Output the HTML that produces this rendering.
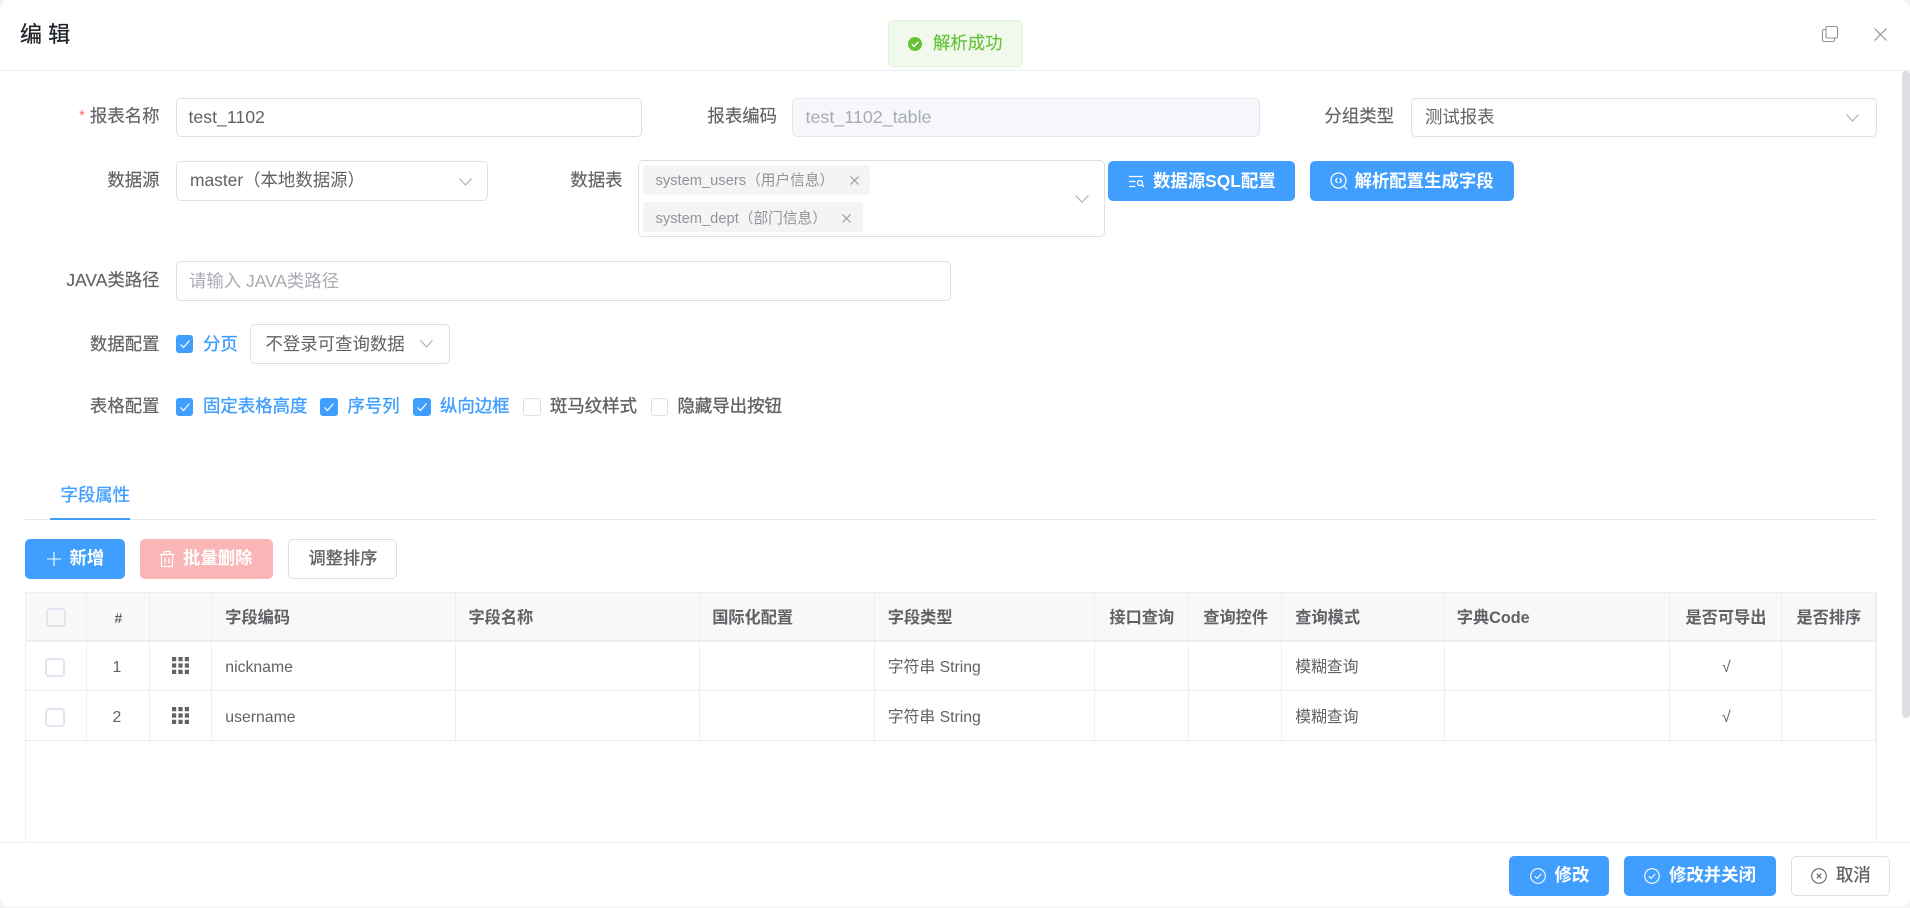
<!DOCTYPE html>
<html lang="zh">
<head>
<meta charset="utf-8">
<title>编辑</title>
<style>
html,body{margin:0;padding:0;width:1910px;height:908px;overflow:hidden;background:#f4f4f4;}
body{font-family:"Liberation Sans","Noto Sans CJK SC",sans-serif;font-size:17.4px;color:#606266;position:relative;}
#dlg{position:absolute;left:0;top:0;width:1910px;height:907px;background:#fff;border-radius:10px;overflow:hidden;}
.a{position:absolute;box-sizing:border-box;}
.t{position:absolute;white-space:nowrap;line-height:24px;height:24px;}
.lb{position:absolute;white-space:nowrap;line-height:24px;height:24px;text-align:right;width:150px;-webkit-text-stroke:.15px #606266;}
.box{position:absolute;box-sizing:border-box;border:1.2px solid #dcdfe6;border-radius:5px;background:#fff;}
.btn{position:absolute;box-sizing:border-box;border-radius:5px;background:#409eff;}
.bt{position:absolute;white-space:nowrap;line-height:24px;height:24px;color:#fff;font-weight:700;}
.cb{position:absolute;box-sizing:border-box;width:17.5px;height:17.5px;border-radius:3px;background:#409eff;}
.cu{position:absolute;box-sizing:border-box;width:17.5px;height:17.5px;border-radius:3px;background:#fff;border:1.2px solid #dcdfe6;}
.cl{color:#409eff;-webkit-text-stroke:.35px #409eff;}
.ml{-webkit-text-stroke:.35px #606266;}
.vl{position:absolute;width:1px;background:#ebeef5;}
.hl{position:absolute;height:1px;background:#ebeef5;}
.th{position:absolute;white-space:nowrap;line-height:24px;height:24px;font-size:16.2px;font-weight:700;color:#606266;top:606px;}
.td{position:absolute;white-space:nowrap;line-height:24px;height:24px;font-size:15.8px;color:#606266;}
.tc{position:absolute;box-sizing:border-box;width:20px;height:19px;border:2px solid #e1e5ee;border-radius:4px;background:#fff;}
svg{position:absolute;overflow:visible;}
</style>
</head>
<body>
<div id="dlg">
<!-- header -->
<div class="t" style="left:20px;top:22px;font-size:22px;line-height:26px;height:26px;color:#1f2329;-webkit-text-stroke:.3px #1f2329;">编 辑</div>
<div class="hl" style="left:0;top:70px;width:1910px;background:#ebeef5;"></div>
<svg style="left:1821px;top:25px" width="18" height="18" viewBox="0 0 18 18" fill="none" stroke="#909399" stroke-width="1.1"><rect x="5" y="1.500" width="11.500" height="11.500" rx="1.500"/><path d="M5 4.500H3.200A1.700 1.700 0 0 0 1.500 6.200v8.600a1.700 1.700 0 0 0 1.700 1.700h8.600a1.700 1.700 0 0 0 1.700-1.700V13"/></svg>
<svg style="left:1874px;top:28px" width="13" height="13" viewBox="0 0 13 13" fill="none" stroke="#8a8d93" stroke-width="1.1"><path d="M.5.500l12 12M12.500.500l-12 12"/></svg>
<!-- scrollbar -->
<div class="a" style="left:1902px;top:71px;width:8px;height:647px;background:#dddee1;border-radius:4px;"></div>

<!-- row 1 -->
<div class="t" style="left:79px;top:103.500px;color:#f56c6c;font-size:15px;">*</div>
<div class="lb" style="left:9.500px;top:104.300px;">报表名称</div>
<div class="box" style="left:175.500px;top:97.500px;width:466px;height:39.500px;"></div>
<div class="t" style="left:188.500px;top:104.800px;font-size:17.7px;">test_1102</div>
<div class="lb" style="left:627px;top:104.300px;">报表编码</div>
<div class="box" style="left:792px;top:97.500px;width:468px;height:39.500px;background:#f5f7fa;border-color:#e4e7ed;"></div>
<div class="t" style="left:805.500px;top:104.800px;color:#a8abb2;font-size:17.9px;">test_1102_table</div>
<div class="lb" style="left:1244px;top:104.300px;">分组类型</div>
<div class="box" style="left:1410.500px;top:97.500px;width:466px;height:39.500px;"></div>
<div class="t" style="left:1425px;top:104.800px;">测试报表</div>
<svg style="left:1846px;top:114px" width="13" height="8" viewBox="0 0 13 8" fill="none" stroke="#a8abb2" stroke-width="1.1"><path d="M.5.500l6 6.500 6-6.500"/></svg>

<!-- row 2 -->
<div class="lb" style="left:9.500px;top:167.500px;">数据源</div>
<div class="box" style="left:175.500px;top:161.300px;width:312.500px;height:39.500px;"></div>
<div class="t" style="left:190px;top:168.400px;">master（本地数据源）</div>
<svg style="left:458.500px;top:178px" width="13" height="8" viewBox="0 0 13 8" fill="none" stroke="#a8abb2" stroke-width="1.1"><path d="M.5.500l6 6.500 6-6.500"/></svg>
<div class="lb" style="left:472.500px;top:167.500px;">数据表</div>
<div class="box" style="left:638px;top:160px;width:466.500px;height:77px;"></div>
<div class="a" style="left:643px;top:165px;width:227px;height:30px;background:#f4f4f5;border-radius:4px;"></div>
<div class="t" style="left:655.500px;top:169px;font-size:14.700px;color:#909399;">system_users（用户信息）</div>
<svg style="left:850px;top:175.500px" width="9" height="9" viewBox="0 0 9 9" fill="none" stroke="#909399" stroke-width="1"><path d="M.5.500l8 8M8.500.500l-8 8"/></svg>
<div class="a" style="left:643px;top:201.700px;width:220px;height:30.300px;background:#f4f4f5;border-radius:4px;"></div>
<div class="t" style="left:655.500px;top:207px;font-size:14.700px;color:#909399;">system_dept（部门信息）</div>
<svg style="left:842px;top:213.500px" width="9" height="9" viewBox="0 0 9 9" fill="none" stroke="#909399" stroke-width="1"><path d="M.5.500l8 8M8.500.500l-8 8"/></svg>
<svg style="left:1075px;top:195px" width="14" height="8" viewBox="0 0 14 8" fill="none" stroke="#a8abb2" stroke-width="1.1"><path d="M.5.500L7 7.200 13.500.500"/></svg>

<div class="btn" style="left:1108px;top:161px;width:187px;height:40px;"></div>
<svg style="left:1129px;top:175px" width="16" height="13" viewBox="0 0 16 13" fill="none" stroke="#fff" stroke-width="1.300"><path d="M0 1.500h14M0 6.500h6.500M0 11.500h6.500"/><circle cx="11" cy="8" r="2.500"/><path d="M13 10l2 2"/></svg>
<div class="bt" style="left:1153px;top:168.700px;">数据源SQL配置</div>
<div class="btn" style="left:1310px;top:161px;width:204px;height:40px;"></div>
<svg style="left:1330px;top:172px" width="18" height="18" viewBox="0 0 18 18" fill="none" stroke="#fff" stroke-width="1.200"><circle cx="8.500" cy="8.500" r="7.500"/><path d="M14 14l3 3.500"/><path d="M7.500 6L5.500 8.500 7.500 11M9.500 6l2 2.500-2 2.500"/></svg>
<div class="bt" style="left:1354.500px;top:168.700px;">解析配置生成字段</div>

<!-- row 3 -->
<div class="lb" style="left:9.500px;top:268px;">JAVA类路径</div>
<div class="box" style="left:175.500px;top:261.300px;width:775px;height:39.500px;"></div>
<div class="t" style="left:189px;top:269px;color:#a8abb2;">请输入 JAVA类路径</div>

<!-- row 4 -->
<div class="lb" style="left:9.500px;top:332px;">数据配置</div>
<div class="cb" style="left:175.500px;top:335px;"></div>
<svg style="left:179.500px;top:339px" width="10" height="10" viewBox="0 0 10 10" fill="none" stroke="#fff" stroke-width="1.200"><path d="M.5 5.500L3.500 8.500 9.500 1.500"/></svg>
<div class="t cl" style="left:203px;top:331.500px;">分页</div>
<div class="box" style="left:250px;top:324.300px;width:199.500px;height:39.500px;"></div>
<div class="t" style="left:265.500px;top:332px;">不登录可查询数据</div>
<svg style="left:420px;top:340px" width="13" height="8" viewBox="0 0 13 8" fill="none" stroke="#a8abb2" stroke-width="1.100"><path d="M.5.500l6 6.500 6-6.500"/></svg>

<!-- row 5 -->
<div class="lb" style="left:9.500px;top:393.700px;">表格配置</div>
<div class="cb" style="left:175.500px;top:398px;"></div>
<svg style="left:179.500px;top:402px" width="10" height="10" viewBox="0 0 10 10" fill="none" stroke="#fff" stroke-width="1.200"><path d="M.5 5.500L3.500 8.500 9.500 1.500"/></svg>
<div class="t cl" style="left:203px;top:393.700px;">固定表格高度</div>
<div class="cb" style="left:320px;top:398px;"></div>
<svg style="left:324px;top:402px" width="10" height="10" viewBox="0 0 10 10" fill="none" stroke="#fff" stroke-width="1.200"><path d="M.5 5.500L3.500 8.500 9.500 1.500"/></svg>
<div class="t cl" style="left:347.500px;top:393.700px;">序号列</div>
<div class="cb" style="left:413px;top:398px;"></div>
<svg style="left:417px;top:402px" width="10" height="10" viewBox="0 0 10 10" fill="none" stroke="#fff" stroke-width="1.200"><path d="M.5 5.500L3.500 8.500 9.500 1.500"/></svg>
<div class="t cl" style="left:440px;top:393.700px;">纵向边框</div>
<div class="cu" style="left:523px;top:398px;"></div>
<div class="t ml" style="left:550px;top:393.700px;">斑马纹样式</div>
<div class="cu" style="left:650.500px;top:398px;"></div>
<div class="t ml" style="left:677.500px;top:393.700px;">隐藏导出按钮</div>

<!-- tabs -->
<div class="a" style="left:25px;top:518.500px;width:1851px;height:1.500px;background:#e4e7ed;"></div>
<div class="a" style="left:50px;top:518px;width:80px;height:2px;background:#409eff;"></div>
<div class="t cl" style="left:60.500px;top:482.500px;">字段属性</div>

<!-- toolbar -->
<div class="btn" style="left:25px;top:539px;width:100px;height:40px;"></div>
<svg style="left:47px;top:552px" width="14" height="14" viewBox="0 0 14 14" fill="none" stroke="#fff" stroke-width="1.100"><path d="M7 0v14M0 7h14"/></svg>
<div class="bt" style="left:69.500px;top:545.700px;">新增</div>
<div class="btn" style="left:140px;top:539px;width:133px;height:40px;background:#fab6b6;"></div>
<svg style="left:159px;top:549.500px" width="16" height="18" viewBox="0 0 16 18" fill="none" stroke="#fff" stroke-width="1.200"><path d="M.5 4.500h15M5 4.500V1.500h6v3M2.500 4.500v12h11v-12M6 7.500v6M10 7.500v6"/></svg>
<div class="bt" style="left:183px;top:545.700px;">批量删除</div>
<div class="box" style="left:288px;top:539px;width:108.500px;height:40px;"></div>
<div class="t ml" style="left:308.500px;top:545.700px;font-size:17.2px;">调整排序</div>

<!-- table -->
<div class="a" style="left:25.500px;top:592.500px;width:1850.500px;height:48px;background:#f8f8f9;"></div>
<div class="hl" style="left:25px;top:592px;width:1851px;"></div>
<div class="hl" style="left:25px;top:640px;width:1851px;height:2px;background:#ebeef5;"></div>
<div class="hl" style="left:25px;top:690px;width:1851px;"></div>
<div class="hl" style="left:25px;top:740px;width:1851px;"></div>
<div class="vl" style="left:25px;top:592px;height:250px;"></div>
<div class="vl" style="left:86px;top:592px;height:150px;"></div>
<div class="vl" style="left:149px;top:592px;height:150px;"></div>
<div class="vl" style="left:211px;top:592px;height:150px;"></div>
<div class="vl" style="left:455px;top:592px;height:150px;"></div>
<div class="vl" style="left:699px;top:592px;height:150px;"></div>
<div class="vl" style="left:874px;top:592px;height:150px;"></div>
<div class="vl" style="left:1094px;top:592px;height:150px;"></div>
<div class="vl" style="left:1188px;top:592px;height:150px;"></div>
<div class="vl" style="left:1281px;top:592px;height:150px;"></div>
<div class="vl" style="left:1444px;top:592px;height:150px;"></div>
<div class="vl" style="left:1669px;top:592px;height:150px;"></div>
<div class="vl" style="left:1781px;top:592px;height:150px;"></div>
<div class="vl" style="left:1875px;top:592px;height:150px;"></div>
<div class="vl" style="left:1876px;top:592px;height:250px;"></div>

<div class="tc" style="left:46px;top:608.300px;background:#f8f8f9;"></div>
<div class="th" style="left:114.500px;font-size:14px;">#</div>
<div class="th" style="left:225.300px;">字段编码</div>
<div class="th" style="left:468.500px;">字段名称</div>
<div class="th" style="left:712.200px;">国际化配置</div>
<div class="th" style="left:887.800px;">字段类型</div>
<div class="th" style="left:1109.400px;">接口查询</div>
<div class="th" style="left:1203.300px;">查询控件</div>
<div class="th" style="left:1295.300px;">查询模式</div>
<div class="th" style="left:1456.800px;">字典Code</div>
<div class="th" style="left:1685.500px;">是否可导出</div>
<div class="th" style="left:1796.500px;">是否排序</div>

<div class="tc" style="left:44.800px;top:658.300px;"></div>
<div class="td" style="left:112.500px;top:656px;">1</div>
<svg style="left:172px;top:657px" width="17" height="17" viewBox="0 0 17 17" fill="#606266"><path d="M0 0h4.200v4.200H0zM6.400 0h4.200v4.200H6.400zM12.800 0H17v4.200h-4.200zM0 6.400h4.200v4.200H0zM6.400 6.400h4.200v4.200H6.400zM12.800 6.400H17v4.200h-4.200zM0 12.800h4.200V17H0zM6.400 12.800h4.200V17H6.400zM12.800 12.800H17V17h-4.200z"/></svg>
<div class="td" style="left:225.300px;top:656px;">nickname</div>
<div class="td" style="left:887.800px;top:656px;">字符串 String</div>
<div class="td" style="left:1295.300px;top:656px;">模糊查询</div>
<div class="td" style="left:1722px;top:656px;">√</div>

<div class="tc" style="left:44.800px;top:708.300px;"></div>
<div class="td" style="left:112.500px;top:706px;">2</div>
<svg style="left:172px;top:707px" width="17" height="17" viewBox="0 0 17 17" fill="#606266"><path d="M0 0h4.200v4.200H0zM6.400 0h4.200v4.200H6.400zM12.800 0H17v4.200h-4.200zM0 6.400h4.200v4.200H0zM6.400 6.400h4.200v4.200H6.400zM12.800 6.400H17v4.200h-4.200zM0 12.800h4.200V17H0zM6.400 12.800h4.200V17H6.400zM12.800 12.800H17V17h-4.200z"/></svg>
<div class="td" style="left:225.300px;top:706px;">username</div>
<div class="td" style="left:887.800px;top:706px;">字符串 String</div>
<div class="td" style="left:1295.300px;top:706px;">模糊查询</div>
<div class="td" style="left:1722px;top:706px;">√</div>

<!-- footer -->
<div class="a" style="left:0;top:842px;width:1910px;height:65px;background:#fff;border-top:1px solid #ebeef5;"></div>
<div class="btn" style="left:1509px;top:856px;width:100px;height:40px;"></div>
<svg style="left:1530px;top:867.500px" width="16" height="16" viewBox="0 0 16 16" fill="none" stroke="#fff" stroke-width="1.100"><circle cx="8" cy="8" r="7.300"/><path d="M4.800 8.200l2.300 2.300 4.200-4.700"/></svg>
<div class="bt" style="left:1554.500px;top:862.800px;">修改</div>
<div class="btn" style="left:1624px;top:856px;width:152px;height:40px;"></div>
<svg style="left:1644px;top:867.500px" width="16" height="16" viewBox="0 0 16 16" fill="none" stroke="#fff" stroke-width="1.100"><circle cx="8" cy="8" r="7.300"/><path d="M4.800 8.200l2.300 2.300 4.200-4.700"/></svg>
<div class="bt" style="left:1669px;top:862.800px;">修改并关闭</div>
<div class="box" style="left:1791px;top:856px;width:98.500px;height:40px;"></div>
<svg style="left:1811px;top:867.500px" width="16" height="16" viewBox="0 0 16 16" fill="none" stroke="#606266" stroke-width="1.100"><circle cx="8" cy="8" r="7.300"/><path d="M5.800 5.800l4.400 4.400M10.200 5.800l-4.400 4.400"/></svg>
<div class="t ml" style="left:1836px;top:862.800px;">取消</div>

<!-- message -->
<div class="a" style="left:888px;top:20px;width:134.500px;height:47px;background:#f0f9eb;border:1px solid #e1f3d8;border-radius:5px;"></div>
<svg style="left:908px;top:36.500px" width="14" height="14" viewBox="0 0 14 14"><circle cx="7" cy="7" r="7" fill="#67c23a"/><path d="M3.800 7.200l2.300 2.300 4.100-4.500" fill="none" stroke="#fff" stroke-width="1.300"/></svg>
<div class="t" style="left:933px;top:30.700px;color:#67c23a;-webkit-text-stroke:.15px #67c23a;">解析成功</div>
</div>
</body>
</html>
